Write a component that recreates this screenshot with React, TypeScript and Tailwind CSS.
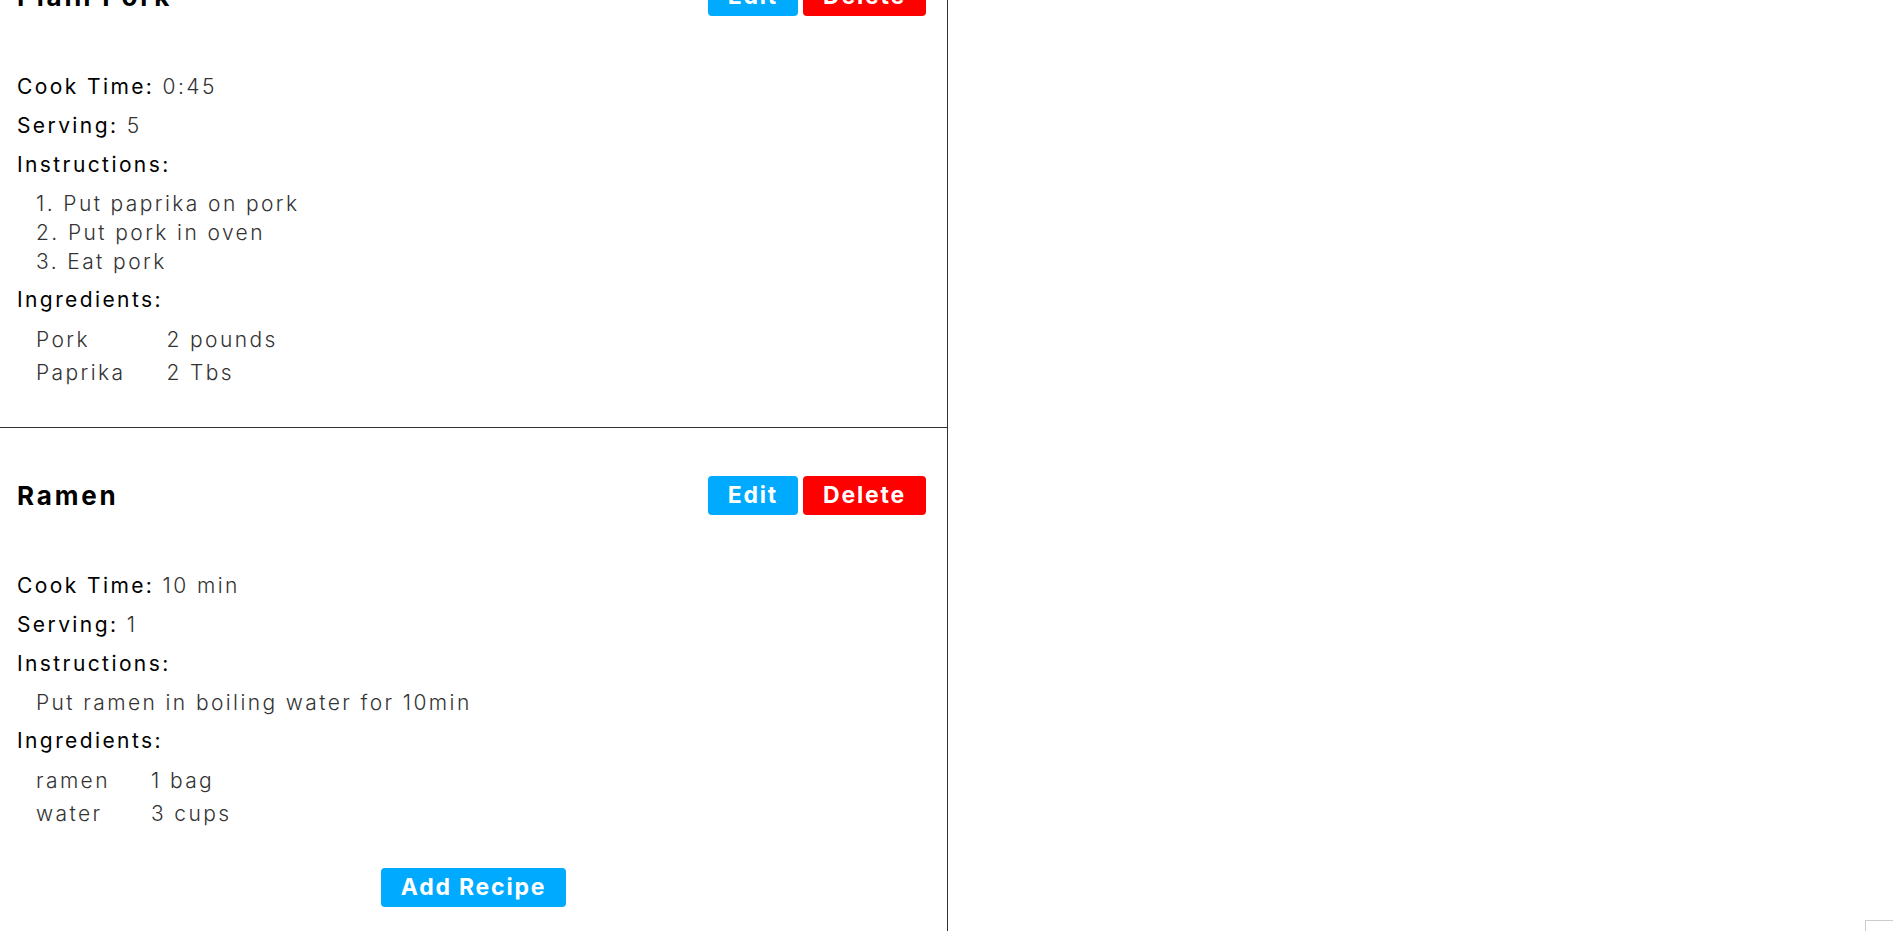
import React from "react";

type Recipe = {
  name: string;
  cookTime: string;
  serving: string;
  instructions: string[];
  ingredients: [string, string][];
};

const recipes: Recipe[] = [
  {
    name: "Plain Pork",
    cookTime: "0:45",
    serving: "5",
    instructions: ["1. Put paprika on pork", "2. Put pork in oven", "3. Eat pork"],
    ingredients: [
      ["Pork", "2 pounds"],
      ["Paprika", "2 Tbs"],
    ],
  },
  {
    name: "Ramen",
    cookTime: "10 min",
    serving: "1",
    instructions: ["Put ramen in boiling water for 10min"],
    ingredients: [
      ["ramen", "1 bag"],
      ["water", "3 cups"],
    ],
  },
];

const btn =
  "h-[39px] px-5 rounded-[4px] text-white font-bold text-[23px] tracking-[1.8px] leading-none";

function Card({ r, first }: { r: Recipe; first: boolean }) {
  return (
    <div className={`pl-[17px] pr-[21px] pt-[48px] pb-[38px] ${first ? "" : "border-t border-[#333]"}`}>
      <div className="flex items-center justify-between h-[39px]">
        <h2 className="text-[26px] font-bold text-black leading-none tracking-[2.8px]">{r.name}</h2>
        <div className="flex gap-[5px]">
          <button className={`${btn} bg-[#00aaff]`}>Edit</button>
          <button className={`${btn} bg-[#ff0000]`}>Delete</button>
        </div>
      </div>
      <div className="mt-[56px] text-[21px] leading-[29px] tracking-[2.4px] text-black">
        <p className="mb-[10px]">
          Cook Time: <span className="font-light text-[#333]">{r.cookTime}</span>
        </p>
        <p className="mb-[10px]">
          Serving: <span className="font-light text-[#333]">{r.serving}</span>
        </p>
        <p className="mb-[10px]">Instructions:</p>
        <div className="pl-[19px] mb-[9px] font-light text-[#333]">
          {r.instructions.map((s) => (
            <div key={s}>{s}</div>
          ))}
        </div>
        <p className="mb-[9px]">Ingredients:</p>
        <table className="ml-[19px] font-light text-[#333]">
          <tbody>
            {r.ingredients.map(([n, q]) => (
              <tr key={n} className="h-[33px]">
                <td className="pr-[41px] p-0 align-middle">{n}</td>
                <td className="p-0 align-middle">{q}</td>
              </tr>
            ))}
          </tbody>
        </table>
      </div>
    </div>
  );
}

export default function App() {
  return (
    <div
      className="relative h-[931px] overflow-hidden bg-white"
      style={{ fontFamily: "Inter, 'Noto Sans', sans-serif" }}
    >
      <div className="flex flex-col w-[948px] h-full border-r border-[#333]">
        <div className="-mt-[71px]">
          {recipes.map((r, i) => (
            <Card key={r.name} r={r} first={i === 0} />
          ))}
          <div className="flex justify-center">
            <button className={`${btn} bg-[#00aaff]`}>Add Recipe</button>
          </div>
        </div>
      </div>
      <div className="absolute left-[1865px] top-[920px] w-[40px] h-[20px] border border-[#ccc] bg-white" />
    </div>
  );
}
